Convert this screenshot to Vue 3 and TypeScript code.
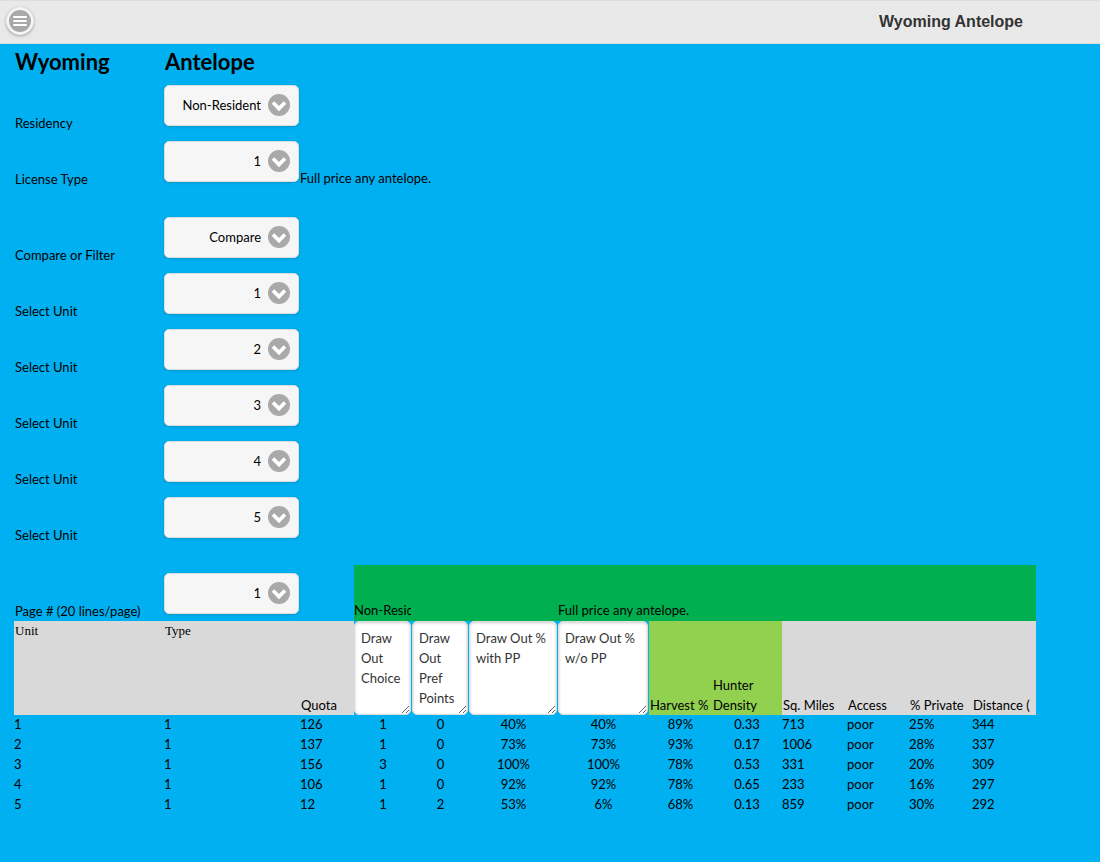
<script setup lang="ts">
import { ref } from 'vue'

interface Field {
  id: string
  label: string
  options: string[]
  value: string
  note?: string
  gapBefore?: boolean
}

interface UnitRow {
  unit: string
  type: string
  quota: string
  choice: string
  points: string
  withPP: string
  withoutPP: string
  harvest: string
  density: string
  miles: string
  access: string
  priv: string
  distance: string
}

const units: string[] = ['1', '2', '3', '4', '5']

const fields = ref<Field[]>([
  { id: 'residency', label: 'Residency', options: ['Non-Resident', 'Resident'], value: 'Non-Resident' },
  { id: 'license', label: 'License Type', options: units, value: '1', note: 'Full price any antelope.' },
  { id: 'mode', label: 'Compare or Filter', options: ['Compare', 'Filter'], value: 'Compare', gapBefore: true },
  ...units.map((u): Field => ({ id: `unit-${u}`, label: 'Select Unit', options: units, value: u })),
])

const page = ref('1')

const drawHeads = ref<string[]>(['Draw Out Choice', 'Draw Out Pref Points', 'Draw Out % with PP', 'Draw Out % w/o PP'])

const columns: string[] = [
  'c-unit', 'c-type', 'c-quota', 'c-choice', 'c-points', 'c-with', 'c-without',
  'c-harvest', 'c-density', 'c-miles', 'c-access', 'c-private', 'c-distance',
]

const centered: (keyof UnitRow)[] = ['choice', 'points', 'withPP', 'withoutPP', 'harvest', 'density']

const rows: UnitRow[] = [
  { unit: '1', type: '1', quota: '126', choice: '1', points: '0', withPP: '40%', withoutPP: '40%', harvest: '89%', density: '0.33', miles: '713', access: 'poor', priv: '25%', distance: '344' },
  { unit: '2', type: '1', quota: '137', choice: '1', points: '0', withPP: '73%', withoutPP: '73%', harvest: '93%', density: '0.17', miles: '1006', access: 'poor', priv: '28%', distance: '337' },
  { unit: '3', type: '1', quota: '156', choice: '3', points: '0', withPP: '100%', withoutPP: '100%', harvest: '78%', density: '0.53', miles: '331', access: 'poor', priv: '20%', distance: '309' },
  { unit: '4', type: '1', quota: '106', choice: '1', points: '0', withPP: '92%', withoutPP: '92%', harvest: '78%', density: '0.65', miles: '233', access: 'poor', priv: '16%', distance: '297' },
  { unit: '5', type: '1', quota: '12', choice: '1', points: '2', withPP: '53%', withoutPP: '6%', harvest: '68%', density: '0.13', miles: '859', access: 'poor', priv: '30%', distance: '292' },
]
</script>

<template>
  <header class="bar">
    <button class="menu" type="button" aria-label="Menu">
      <svg viewBox="0 0 22 22" width="22" height="22" aria-hidden="true">
        <circle cx="11" cy="11" r="11" fill="#a9a9a9" />
        <path d="M5 7h12M5 11h12M5 15h12" stroke="#fff" stroke-width="2" stroke-linecap="round" />
      </svg>
    </button>
    <h1 class="title">Wyoming Antelope</h1>
  </header>

  <main class="content">
    <div class="row heading">
      <h2>Wyoming</h2>
      <h2>Antelope</h2>
    </div>

    <div v-for="f in fields" :key="f.id" class="row" :class="{ gap: f.gapBefore }">
      <label class="label" :for="f.id">{{ f.label }}</label>
      <div class="select">
        <select :id="f.id" v-model="f.value">
          <option v-for="o in f.options" :key="o">{{ o }}</option>
        </select>
        <svg class="chevron" viewBox="0 0 22 22" width="22" height="22" aria-hidden="true">
          <circle cx="11" cy="11" r="11" fill="#a9a9a9" />
          <path d="M5 8.6L11 14.6L17 8.6" fill="none" stroke="#fff" stroke-width="3.6" />
        </svg>
      </div>
      <span v-if="f.note" class="note">{{ f.note }}</span>
    </div>

    <table class="grid">
      <colgroup>
        <col v-for="c in columns" :key="c" :class="c" />
      </colgroup>
      <thead>
        <tr class="band">
          <td class="page-label"><label for="page">Page # (20 lines/page)</label></td>
          <td class="page-cell">
            <div class="select">
              <select id="page" v-model="page">
                <option>1</option>
              </select>
              <svg class="chevron" viewBox="0 0 22 22" width="22" height="22" aria-hidden="true">
                <circle cx="11" cy="11" r="11" fill="#a9a9a9" />
                <path d="M5 8.6L11 14.6L17 8.6" fill="none" stroke="#fff" stroke-width="3.6" />
              </svg>
            </div>
          </td>
          <td></td>
          <td class="green"><div class="clip">Non-Resident</div></td>
          <td class="green" colspan="2"></td>
          <td class="green" colspan="7">Full price any antelope.</td>
        </tr>
        <tr class="heads">
          <th class="gray serif" scope="col">Unit</th>
          <th class="gray serif" scope="col">Type</th>
          <th class="gray" scope="col">Quota</th>
          <th v-for="(h, i) in drawHeads" :key="i" class="area" scope="col">
            <textarea v-model="drawHeads[i]" :aria-label="h"></textarea>
          </th>
          <th class="lime" scope="col">Harvest %</th>
          <th class="lime" scope="col">Hunter<br />Density</th>
          <th class="gray" scope="col">Sq. Miles</th>
          <th class="gray" scope="col">Access</th>
          <th class="gray" scope="col">% Private</th>
          <th class="gray" scope="col">Distance (</th>
        </tr>
      </thead>
      <tbody>
        <tr v-for="r in rows" :key="r.unit">
          <td v-for="(v, k) in r" :key="k" :class="{ center: centered.includes(k) }">{{ v }}</td>
        </tr>
      </tbody>
    </table>
  </main>
</template>

<style>
body {
  margin: 0;
  background: #00b0f0;
}
</style>

<style scoped>
* {
  box-sizing: border-box;
}

.bar {
  display: flex;
  align-items: center;
  justify-content: space-between;
  height: 44px;
  padding: 0 77px 0 6px;
  background: #e9e9e9;
  border-top: 1px solid #ddd;
  border-bottom: 1px solid #ddd;
}

.menu {
  display: flex;
  align-items: center;
  justify-content: center;
  width: 28px;
  height: 28px;
  margin-bottom: 2px;
  padding: 0;
  border: 1px solid #f0f0f0;
  border-radius: 50%;
  background: #f6f6f6;
  box-shadow: 0 1px 3px rgba(0, 0, 0, 0.3);
}

.menu svg {
  flex: none;
}

.title {
  margin: 0;
  font: bold 16px/20px "Liberation Sans", Arial, sans-serif;
  color: #333;
}

.content {
  padding: 0 64px 32px 14px;
  font: 13px/20px Lato, sans-serif;
  color: #000;
}

.row {
  display: grid;
  grid-template-columns: 150fr 136fr 736fr;
  align-items: end;
  min-height: 56px;
}

.row.gap {
  margin-top: 20px;
}

.row.heading {
  align-items: center;
  min-height: 33px;
  padding-top: 2px;
}

h2 {
  margin: 0;
  padding-left: 1px;
  font: bold 22px/31px Lato, sans-serif;
}

.label {
  padding-left: 1px;
}

.note,
.green {
  line-height: 22px;
}

.select {
  position: relative;
  margin: 8px 1px 7px 0;
}

.select select {
  display: block;
  width: 100%;
  height: 41px;
  padding: 0 37px 2px 4px;
  appearance: none;
  border: 1px solid #ddd;
  border-radius: 5px;
  background: #f6f6f6;
  box-shadow: 0 1px 3px rgba(0, 0, 0, 0.15);
  font: inherit;
  color: #000;
  text-align-last: right;
}

.chevron {
  position: absolute;
  top: 9px;
  right: 9px;
  pointer-events: none;
}

.grid {
  width: 100%;
  margin-top: 20px;
  table-layout: fixed;
  border-collapse: collapse;
}

.c-unit { width: 150px; }
.c-type { width: 136px; }
.c-quota { width: 54px; }
.c-choice { width: 58px; }
.c-points { width: 57px; }
.c-with { width: 89px; }
.c-without { width: 91px; }
.c-harvest { width: 63px; }
.c-density { width: 70px; }
.c-miles { width: 65px; }
.c-access { width: 62px; }
.c-private { width: 63px; }
.c-distance { width: 64px; }

td,
th {
  height: 20px;
  padding: 0;
  font-weight: normal;
  text-align: left;
  white-space: nowrap;
}

tbody td {
  padding-bottom: 2px;
  line-height: 18px;
}

.band td {
  height: 56px;
  vertical-align: bottom;
}

.band .page-label {
  padding-left: 1px;
}

.clip {
  margin-right: 1px;
  overflow: hidden;
}

.heads th {
  height: 94px;
  padding-left: 1px;
  vertical-align: bottom;
}

.heads .serif {
  font: 13px/20px "Liberation Serif", "Times New Roman", serif;
  vertical-align: top;
}

.green {
  background: #00b050;
}

.lime {
  background: #92d050;
}

.gray {
  background: #d9d9d9;
}

.heads .area {
  padding: 0 1px 0 0;
}

textarea {
  display: block;
  width: 100%;
  height: 94px;
  padding: 6px;
  border: 1px solid #ddd;
  border-radius: 5px;
  background: #fff;
  box-shadow: inset 0 1px 3px rgba(0, 0, 0, 0.2);
  overflow: hidden;
  font: inherit;
  color: #333;
  resize: both;
}

.center {
  text-align: center;
}
</style>
